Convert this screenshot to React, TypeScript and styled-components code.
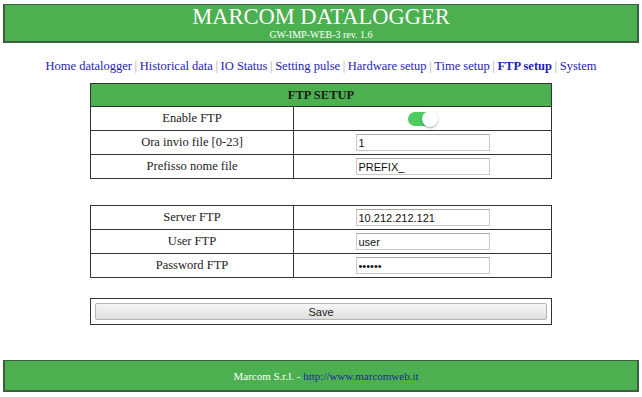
import React, { useState } from 'react';
import styled, { createGlobalStyle } from 'styled-components';

const GlobalStyle = createGlobalStyle`
  html, body {
    margin: 0;
    padding: 0;
    background: #ffffff;
    font-family: "Liberation Serif", "Times New Roman", serif;
  }
`;

const Page = styled.div`
  padding: 4px 3px 0 3px;
  width: 636px;
`;

const Header = styled.header`
  background: #4caf50;
  border: 1px solid #3d5f3f;
  border-width: 1px 2px 2px 2px;
  height: 36px;
  display: flex;
  flex-direction: column;
  align-items: center;
  justify-content: center;
  color: #ffffff;
`;

const Title = styled.h1`
  margin: 0;
  font-size: 22.5px;
  font-weight: normal;
  line-height: 22px;
`;

const Subtitle = styled.div`
  font-size: 10px;
  line-height: 12px;
  margin-top: 1px;
`;

const Nav = styled.nav`
  margin-top: 15px;
  text-align: center;
  font-size: 12.5px;
  line-height: 16px;
  color: #999;
`;

const NavLink = styled.a<{ $active?: boolean }>`
  color: #1e1eb0;
  text-decoration: none;
  font-weight: ${(p) => (p.$active ? 'bold' : 'normal')};
`;

const Sep = styled.span`
  color: #aaa;
  margin: 0 2.6px;
`;

const Table = styled.table<{ $gap?: number }>`
  width: 462px;
  margin: ${(p) => p.$gap ?? 0}px auto 0 auto;
  border-collapse: collapse;
  border: 1px solid #333;
  font-family: "Liberation Serif", "Times New Roman", serif;
  font-size: 12.5px;
`;

const HeadCell = styled.th`
  background: #4caf50;
  height: 22px;
  padding: 0;
  font-size: 12.5px;
  font-weight: bold;
  color: #1b1b1b;
  border-bottom: 1px solid #333;
`;

const Row = styled.tr`
  height: 24px;
  border-top: 1px solid #333;
  &:first-child {
    border-top: none;
  }
`;

const Label = styled.td`
  width: 202px;
  text-align: center;
  padding: 0;
  border-right: 1px solid #333;
  color: #222;
`;

const Value = styled.td`
  text-align: center;
  padding: 0;
`;

const Input = styled.input`
  box-sizing: border-box;
  width: 134px;
  height: 17px;
  padding: 0 2px;
  border: 1px solid #c8c8c8;
  border-top-color: #a8a8a8;
  font-family: "Liberation Sans", Arial, sans-serif;
  font-size: 11px;
  color: #111;
  vertical-align: middle;
  outline: none;
`;

const Switch = styled.label`
  position: relative;
  display: inline-block;
  width: 30px;
  height: 16px;
  vertical-align: middle;
  cursor: pointer;
`;

const Track = styled.span<{ $on: boolean }>`
  position: absolute;
  left: 0;
  top: 1px;
  width: 28px;
  height: 14px;
  border-radius: 7px;
  background: ${(p) => (p.$on ? '#4ccc5e' : '#ccc')};
`;

const Knob = styled.span<{ $on: boolean }>`
  position: absolute;
  top: 0;
  left: ${(p) => (p.$on ? '14px' : '0')};
  width: 16px;
  height: 16px;
  border-radius: 50%;
  background: #fff;
  box-shadow: 0 1px 2px rgba(0, 0, 0, 0.35);
`;

const SaveCell = styled.td`
  padding: 4px 4px 4px 4px;
  height: 16px;
`;

const SaveButton = styled.button`
  width: 100%;
  height: 17px;
  padding: 0;
  border: 1px solid #b5b5b5;
  border-radius: 2px;
  background: linear-gradient(#f6f6f6, #dedede);
  font-family: "Liberation Sans", Arial, sans-serif;
  font-size: 11px;
  color: #222;
  cursor: pointer;
  display: block;
`;

const Footer = styled.footer`
  margin-top: 35px;
  background: #4caf50;
  border: 1px solid #3d5f3f;
  border-width: 1px 2px 2px 2px;
  height: 29px;
  display: flex;
  align-items: center;
  justify-content: center;
  padding-left: 10px;
  font-size: 11px;
  color: #ffffff;
`;

const FooterLink = styled.a`
  color: #1a2a9e;
  text-decoration: none;
`;

const links = [
  'Home datalogger',
  'Historical data',
  'IO Status',
  'Setting pulse',
  'Hardware setup',
  'Time setup',
  'FTP setup',
  'System',
];

const App: React.FC = () => {
  const [enabled, setEnabled] = useState(true);
  const [hour, setHour] = useState('1');
  const [prefix, setPrefix] = useState('PREFIX_');
  const [server, setServer] = useState('10.212.212.121');
  const [user, setUser] = useState('user');
  const [password, setPassword] = useState('123456');

  return (
    <Page>
      <GlobalStyle />
      <Header>
        <Title>MARCOM DATALOGGER</Title>
        <Subtitle>GW-IMP-WEB-3 rev. 1.6</Subtitle>
      </Header>

      <Nav>
        {links.map((l, i) => (
          <React.Fragment key={l}>
            {i > 0 && <Sep>|</Sep>}
            <NavLink href="#" $active={l === 'FTP setup'}>
              {l}
            </NavLink>
          </React.Fragment>
        ))}
      </Nav>

      <Table $gap={9}>
        <thead>
          <tr>
            <HeadCell colSpan={2}>FTP SETUP</HeadCell>
          </tr>
        </thead>
        <tbody>
          <Row>
            <Label>Enable FTP</Label>
            <Value>
              <Switch onClick={() => setEnabled((v) => !v)}>
                <Track $on={enabled} />
                <Knob $on={enabled} />
              </Switch>
            </Value>
          </Row>
          <Row>
            <Label>Ora invio file [0-23]</Label>
            <Value>
              <Input value={hour} onChange={(e) => setHour(e.target.value)} />
            </Value>
          </Row>
          <Row>
            <Label>Prefisso nome file</Label>
            <Value>
              <Input value={prefix} onChange={(e) => setPrefix(e.target.value)} />
            </Value>
          </Row>
        </tbody>
      </Table>

      <Table $gap={26}>
        <tbody>
          <Row>
            <Label>Server FTP</Label>
            <Value>
              <Input value={server} onChange={(e) => setServer(e.target.value)} />
            </Value>
          </Row>
          <Row>
            <Label>User FTP</Label>
            <Value>
              <Input value={user} onChange={(e) => setUser(e.target.value)} />
            </Value>
          </Row>
          <Row>
            <Label>Password FTP</Label>
            <Value>
              <Input type="password" value={password} onChange={(e) => setPassword(e.target.value)} />
            </Value>
          </Row>
        </tbody>
      </Table>

      <Table $gap={20}>
        <tbody>
          <tr>
            <SaveCell>
              <SaveButton type="button">Save</SaveButton>
            </SaveCell>
          </tr>
        </tbody>
      </Table>

      <Footer>
        Marcom S.r.l. -&nbsp;<FooterLink href="#">http://www.marcomweb.it</FooterLink>
      </Footer>
    </Page>
  );
};

export default App;
